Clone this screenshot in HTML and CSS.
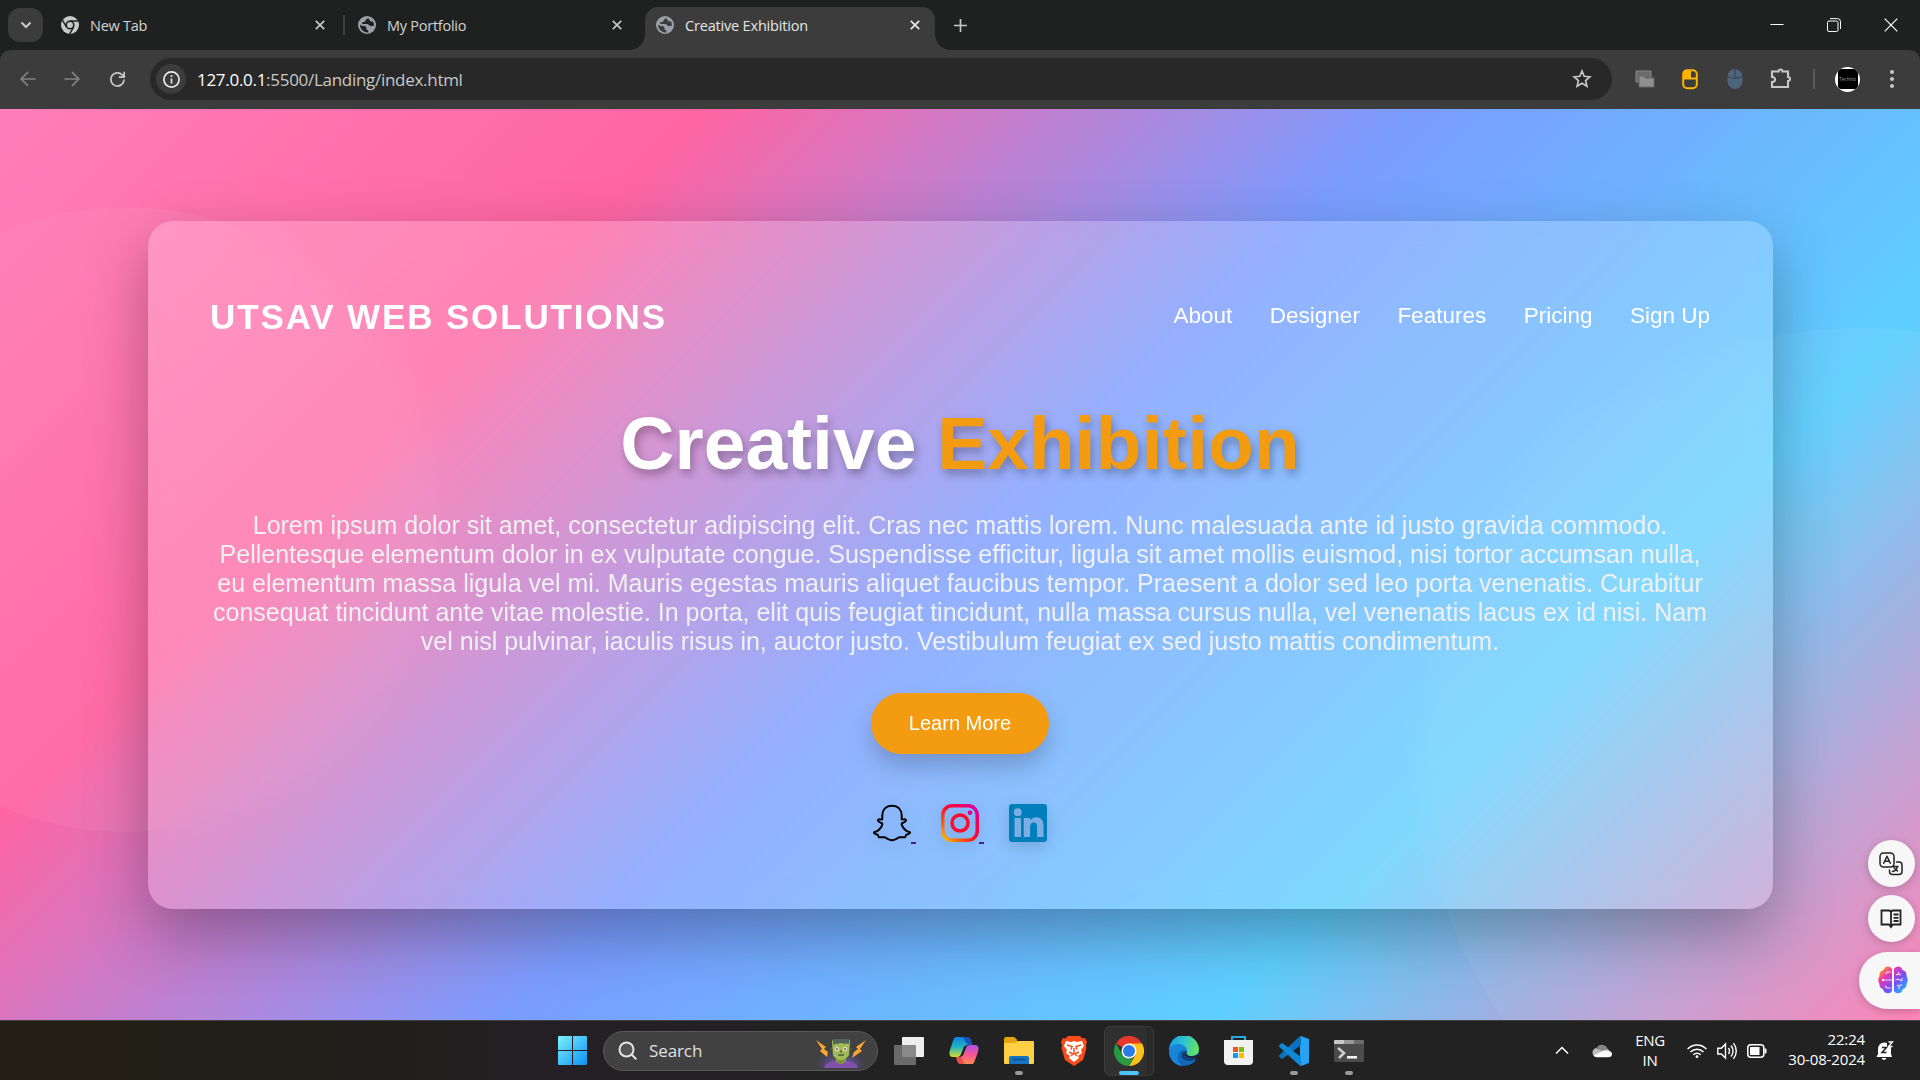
FILE: index.html
```html
<!DOCTYPE html>
<html lang="en">
<head>
<meta charset="utf-8">
<title>Creative Exhibition</title>
<link rel="stylesheet" href="styles.css">
</head>
<body>
<div class="screen">
  <div class="tabstrip">
    <div class="tab-search"><svg width="12" height="8" viewBox="0 0 12 8"><path d="M1.5 1.5 6 6l4.500-4.500" class="ln w2"/></svg></div>
    <div class="tab tab-first">
      <svg class="fav" width="18" height="18" viewBox="0 0 18 18"><circle cx="9" cy="9" r="9" fill="#c7cac9"/><circle cx="9" cy="9" r="3.800" fill="#c7cac9" stroke="#1f2120" stroke-width="1.600"/><path d="M9 4.900h8M5.400 11 1.500 4.200M12.600 11l-4 7" stroke="#1f2120" stroke-width="1.500"/></svg>
      <span class="tab-title">New Tab</span>
      <svg class="x" width="10" height="10" viewBox="0 0 10 10"><path d="M.8.8l8.400 8.400M9.200.8.8 9.200" class="ln"/></svg>
    </div>
    <div class="tab-sep"></div>
    <div class="tab tab-second">
      <svg class="fav" width="18" height="18" viewBox="0 0 18 18"><circle cx="9" cy="9" r="9" fill="#9aa0a6"/><path d="M2 8.500q1.500 1.500 4 1.500 2.500 0 2.500 2v1.500q2 0 2 2.700-2 .5-4-.4Q2 13.500 2 8.500zM10.500 2.200Q8 2.500 7.500 4.500q0 1.500-2 1.500T4 7.500q.5.800 3 .5 3-.5 4 1t2.500 1q2-.5 2.500 0 .3-3-1.200-4.800-2 .8-2.800-.5-.8-1.500-1.500-2.500z" fill="#1f2120"/></svg>
      <span class="tab-title">My Portfolio</span>
      <svg class="x" width="10" height="10" viewBox="0 0 10 10"><path d="M.8.8l8.400 8.400M9.200.8.8 9.200" class="ln"/></svg>
    </div>
    <div class="tab tab-active">
      <svg class="fav" width="18" height="18" viewBox="0 0 18 18"><circle cx="9" cy="9" r="9" fill="#9aa0a6"/><path d="M2 8.500q1.500 1.500 4 1.500 2.500 0 2.500 2v1.500q2 0 2 2.700-2 .5-4-.4Q2 13.500 2 8.500zM10.500 2.200Q8 2.500 7.500 4.500q0 1.500-2 1.500T4 7.500q.5.800 3 .5 3-.5 4 1t2.500 1q2-.5 2.500 0 .3-3-1.200-4.800-2 .8-2.800-.5-.8-1.500-1.500-2.500z" fill="#3c3c3c"/></svg>
      <span class="tab-title">Creative Exhibition</span>
      <svg class="x" width="10" height="10" viewBox="0 0 10 10"><path d="M.8.8l8.400 8.400M9.200.8.8 9.200" class="ln lt"/></svg>
    </div>
    <svg class="plus" width="13" height="13" viewBox="0 0 13 13"><path d="M6.500 0v13M0 6.500h13" class="ln"/></svg>
    <div class="win-controls">
      <svg width="14" height="14" viewBox="0 0 14 14"><path d="M.5 6.500h13" stroke="#fff"/></svg>
      <svg width="14" height="14" viewBox="0 0 14 14" fill="none" stroke="#fff"><rect x=".5" y="3" width="10.500" height="10.500" rx="1.500"/><path d="M3 .6h7.500a3 3 0 0 1 3 3V11"/></svg>
      <svg width="14" height="14" viewBox="0 0 14 14"><path d="M.7.7l12.600 12.600M13.300.7.7 13.300" stroke="#fff" stroke-width="1.200"/></svg>
    </div>
  </div>

  <div class="toolbar-back"><div class="toolbar">
    <svg class="tool dim" width="16" height="16" viewBox="0 0 16 16"><path d="M15.500 8H1.500M8 1.200 1.200 8 8 14.800" class="ln"/></svg>
    <svg class="tool dim fwd" width="16" height="16" viewBox="0 0 16 16"><path d="M.5 8h14M8 1.200 14.800 8 8 14.800" class="ln"/></svg>
    <svg class="tool reload" width="17" height="17" viewBox="0 0 17 17"><path d="M15 8.500a6.600 6.600 0 1 1-1.800-4.600L15 5.700M15.200.8v5.400h-5.400" class="ln"/></svg>
    <div class="omnibox">
      <span class="info"><svg width="17" height="17" viewBox="0 0 17 17"><circle cx="8.500" cy="8.500" r="7.600" class="ln lt"/><path d="M8.500 7.500v5M8.500 4.300v1.800" class="ln lt"/></svg></span>
      <span class="url"><b>127.0.0.1</b>:5500/Landing/index.html</span>
      <svg class="star" width="20" height="20" viewBox="0 0 20 20"><path d="M10 2l2.200 5.300 5.700.5-4.300 3.800 1.300 5.600L10 14.200l-4.900 3 1.300-5.600L2.100 7.800l5.700-.5z" class="ln"/></svg>
    </div>
    <div class="exts">
      <svg width="20" height="18" viewBox="0 0 20 18"><path d="M1 1h15v11H1z" fill="#6b6b6b" stroke="#888"/><path d="M4 6h5l1 2h9v9H4z" fill="#8f8f8f" stroke="#666"/></svg>
      <svg width="20" height="22" viewBox="0 0 20 22"><rect x="3.200" y="2.200" width="13.600" height="18" rx="4" fill="none" stroke="#fdb400" stroke-width="2"/><path d="M3 4q1-2 3-2h4v8H3zM3 9.500h14v2H3zM9 2h2v8H9z" fill="#fdb400"/><path d="M5 4.500h3.500V9H5z" fill="#fdb400"/></svg>
      <svg width="20" height="22" viewBox="0 0 20 22"><path d="M2.500 9a7.500 8 0 0 1 15 0v4a7.500 8 0 0 1-15 0z" fill="#4d657a"/><path d="M2.500 8.500q7.500 3.500 15 0M10 1v9" stroke="#35424e" fill="none"/></svg>
      <svg width="22" height="22" viewBox="0 0 22 22"><path d="M2 3.500h6.500a2 2 0 0 1 4 0H18v5.500a2 2 0 0 1 0 4V19H2v-5q3 0 3-2.500T2 9z" class="ln w2"/></svg>
    </div>
    <div class="tool-sep"></div>
    <div class="avatar"><span>Techno</span></div>
    <svg class="dots" width="6" height="20" viewBox="0 0 6 20" fill="#c7c7c7"><circle cx="3" cy="3" r="2"/><circle cx="3" cy="10" r="2"/><circle cx="3" cy="17" r="2"/></svg>
  </div></div>

  <main class="page">
    <div class="orb orb-left"></div>
    <div class="orb orb-right"></div>
    <section class="card">
      <header class="card-head">
        <div class="logo">UTSAV WEB SOLUTIONS</div>
        <nav class="nav"><a>About</a><a>Designer</a><a>Features</a><a>Pricing</a><a>Sign Up</a></nav>
      </header>
      <h1>Creative <span>Exhibition</span></h1>
      <p class="lead">Lorem ipsum dolor sit amet, consectetur adipiscing elit. Cras nec mattis lorem. Nunc malesuada ante id justo gravida commodo. Pellentesque elementum dolor in ex vulputate congue. Suspendisse efficitur, ligula sit amet mollis euismod, nisi tortor accumsan nulla, eu elementum massa ligula vel mi. Mauris egestas mauris aliquet faucibus tempor. Praesent a dolor sed leo porta venenatis. Curabitur consequat tincidunt ante vitae molestie. In porta, elit quis feugiat tincidunt, nulla massa cursus nulla, vel venenatis lacus ex id nisi. Nam vel nisl pulvinar, iaculis risus in, auctor justo. Vestibulum feugiat ex sed justo mattis condimentum.</p>
      <a class="cta">Learn More</a>
      <div class="social">
        <a><svg width="38" height="38" viewBox="0 0 38 38"><path d="M19 1.700c-6 0-9.700 4-9.700 9.500v4.200c-1.200.6-3-.8-4 .2-.8 1.200.4 2.400 3.500 3.600.9.5.6 1.700-.3 3.300-1.600 2.900-4 4.800-7.200 5.600-.9.600.1 1.800 3.500 2.700.6.700.2 2 1.200 2.400 1.800.5 3.600-.4 5.500.1 2.500.7 4.300 3 7.500 3s5-2.300 7.500-3c1.900-.5 3.700.4 5.500-.1 1-.4.6-1.700 1.200-2.400 3.400-.9 4.400-2.100 3.500-2.700-3.200-.8-5.600-2.700-7.200-5.600-.9-1.600-1.200-2.800-.3-3.300 3.100-1.200 4.300-2.400 3.500-3.600-1-1-2.800.4-4-.2v-4.200c0-5.500-3.700-9.500-9.700-9.500z" fill="none" stroke="#000" stroke-width="2" stroke-linejoin="round"/></svg><i></i></a>
        <a><svg width="38" height="38" viewBox="0 0 38 38"><defs><linearGradient id="ig" x1="0" y1="1" x2="1" y2="0"><stop offset="0" stop-color="#fd0"/><stop offset=".2" stop-color="#ff7a00"/><stop offset=".5" stop-color="#ff0c28"/><stop offset=".75" stop-color="#ef0060"/><stop offset="1" stop-color="#d000c8"/></linearGradient></defs><path d="M11 0h16a11 11 0 0 1 11 11v16a11 11 0 0 1-11 11H11A11 11 0 0 1 0 27V11A11 11 0 0 1 11 0zm0 3.500A7.500 7.500 0 0 0 3.500 11v16a7.500 7.500 0 0 0 7.500 7.500h16a7.500 7.500 0 0 0 7.500-7.500V11A7.500 7.500 0 0 0 27 3.500z" fill="url(#ig)"/><circle cx="19" cy="19" r="8" fill="none" stroke="#ff0b2e" stroke-width="3.500"/><circle cx="29" cy="8.800" r="2.300" fill="#e00086"/></svg><i></i></a>
        <a><svg width="38" height="38" viewBox="0 0 38 38"><path fill="#007ebb" d="M3 0h32a3 3 0 0 1 3 3v32a3 3 0 0 1-3 3H3a3 3 0 0 1-3-3V3a3 3 0 0 1 3-3z"/><g fill="#7baee4"><circle cx="8.800" cy="8.200" r="4"/><path d="M5.500 14H12v19H5.500zM14.800 14H21v2.600c1.300-2 3.400-3.300 6.200-3.300 4.900 0 7.300 3.100 7.300 8.700v11h-6.400V23c0-2.900-1-4.500-3.300-4.500-2.600 0-3.700 1.800-3.700 4.500v10h-6.300z"/></g></svg></a>
      </div>
    </section>

    <div class="bubble bubble-a"><svg width="24" height="24" viewBox="0 0 24 24" fill="none" stroke="#222" stroke-width="1.500" stroke-linecap="round" stroke-linejoin="round"><rect x="1" y="1" width="14" height="14" rx="3.500"/><path d="M4.700 11.300 8 4.300l3.300 7M5.800 9.300h4.400M17.500 10H20a3 3 0 0 1 3 3v6.500a3 3 0 0 1-3 3h-6.500a3 3 0 0 1-3-3V18M14 14.500h5M18 15c0 2-2 4-4.500 4.500M15 16l3.500 3"/></svg></div>
    <div class="bubble bubble-b"><svg width="22" height="20" viewBox="0 0 22 20" fill="none" stroke="#222" stroke-width="1.800"><path d="M11 3 9.500 1.500H1.500v14H9L11 18l2-2.500h7.500v-14h-8L11 3zM11 3v14M13.500 5.500h5M13.500 8.800h5M13.500 12h5"/></svg></div>
    <div class="brain-tab"><svg width="30" height="28" viewBox="0 0 30 28"><defs><linearGradient id="br" x1="0" y1="0" x2="1" y2="1"><stop offset=".1" stop-color="#ff9a1f"/><stop offset=".3" stop-color="#ee35b0"/><stop offset=".6" stop-color="#7050f5"/><stop offset=".9" stop-color="#20b8ff"/></linearGradient></defs><path d="M14 3v22q-2 3-5 2-3 0-4-4-4-1-3.500-5Q-1 14 1.500 10 1 5 5.500 4 7 0 11 .7 13 1 14 3zM16 3v22q2 3 5 2 3 0 4-4 4-1 3.500-5 2.500-4 0-8 .5-5-4-6Q23 0 19 .7 17 1 16 3z" fill="url(#br)"/><path d="M5 14h9M7.500 8l2-2H13M7 20l2 2h4M18 9l2-1 1-2M20 8l3 1M17.500 14l3-1 3 2 1-3M19 19l2 1v3M21 20l3-1.500" stroke="#f3d8ff" stroke-width="1.100" fill="none"/><circle cx="5" cy="14" r="1.200" fill="#fff"/></svg></div>
  </main>

  <footer class="taskbar">
    <div class="start"><svg width="29" height="29" viewBox="0 0 29 29"><defs><linearGradient id="wn" x1="0" y1="0" x2="1" y2="1" ><stop offset="0" stop-color="#7df0ff"/><stop offset="1" stop-color="#0a92f5"/></linearGradient></defs><path d="M0 1q0-1 1-1h13v14H0zM15 0h13q1 0 1 1v13H15zM0 15h14v14H1q-1 0-1-1zM15 15h14v13q0 1-1 1H15z" fill="url(#wn)"/></svg></div>
    <div class="search">
      <svg width="20" height="20" viewBox="0 0 20 20" fill="#555" stroke="#e4e4e4" stroke-width="2" stroke-linecap="round"><circle cx="8.500" cy="8.500" r="7"/><path d="M13.800 13.800l4 4"/></svg>
      <span>Search</span>
      <svg class="monster" width="52" height="32" viewBox="0 0 52 32"><defs><radialGradient id="gl" cy=".7"><stop offset="0" stop-color="#8a68e8"/><stop offset="1" stop-color="#4a4580" stop-opacity="0"/></radialGradient></defs><ellipse cx="26" cy="22" rx="26" ry="16" fill="url(#gl)"/><path d="M9 32q1-6 11-7h11q11 1 12 7z" fill="#8250ac"/><path d="M21 18h10v8q-5 4-10 0z" fill="#7e9440"/><path d="M17 6q0-3 3-3h12q3 0 3 3l-1 13q-3 5-8 5t-8-5z" fill="#a2bb54"/><path d="M18 3h16v5q-3-1-5 0-4-2-6 0-3-1-5 1z" fill="#4f6460"/><circle cx="22" cy="13" r="2" fill="#eee"/><circle cx="30" cy="13" r="2" fill="#eee"/><circle cx="22" cy="13" r="1" fill="#843"/><circle cx="30" cy="13" r="1" fill="#843"/><path d="M23 19h6M26 14v3M15 13h2M35 13h2M17 22h3M32 22h3" stroke="#4b6238" stroke-width="1.300"/><path d="M1 4l10 7-2 2 4 3-1 5-7-6 2-2zM51 4l-10 7 2 2-4 3-2 6 10-7-2-2z" fill="#ffa52e"/></svg>
    </div>
    <div class="apps">
      <div class="app"><svg width="30" height="28" viewBox="0 0 30 28"><rect x="8" y="0" width="22" height="20" rx="1" fill="#eee"/><rect x="0" y="8" width="22" height="20" rx="1" fill="#777" fill-opacity=".85"/></svg></div>
      <div class="app"><svg width="30" height="28" viewBox="0 0 30 28"><defs><linearGradient id="c1" x1="0" y1="0" x2="0" y2="1"><stop offset="0" stop-color="#1380e0"/><stop offset=".5" stop-color="#1fb5c0"/><stop offset="1" stop-color="#d8e030"/></linearGradient><linearGradient id="c2" x1="0" y1="1" x2="0" y2="0"><stop offset="0" stop-color="#ff8a50"/><stop offset=".5" stop-color="#f55596"/><stop offset="1" stop-color="#ab50ec"/></linearGradient></defs><path d="M7 0h11q3 0 4 4l1 4h-4q-4 0-5 4l-2 5q-1 3-4 3H4q-5 0-3-7L4 4q1-4 3-4z" fill="url(#c1)"/><path d="M18 0q3 0 4 4l1 4h-4l-3-4q-1-4-4-4z" fill="#1650b8"/><path d="M23 27H12q-3 0-4-4l-1-3h3q4 0 5-4l2-5q1-3 4-3h5q5 0 3 7l-3 8q-1 4-3 4z" fill="url(#c2)"/><path d="M12 27q-3 0-4-4l-1-3h4q2 0 3 4t3 3z" fill="#e94c45"/></svg></div>
      <div class="app run"><svg width="30" height="27" viewBox="0 0 30 27"><path d="M0 2Q0 0 2 0h8l3 2.500V7H0z" fill="#e5a50a"/><path d="M0 6h10l4-2h15q1 0 1 1v21q0 1-1 1H1q-1 0-1-1z" fill="#ffcf45"/><path d="M5 27v-6q0-2 2-2h16q2 0 2 2v6z" fill="#1673c0"/><path d="M9 22.500h12" stroke="#0c4d8c" stroke-width="1.500"/></svg></div>
      <div class="app"><svg width="26" height="30" viewBox="0 0 26 30"><path d="M7 0h12l2.500 2.500L24 2l2 4-1 3 .5 3-3.500 12-9 6-9-6L.5 12 1 9 0 6l2-4 2.500.5z" fill="#fb4b18"/><path d="M5 5l5 1 3-1 3 1 5-1 2 5-3 4 1 3-4 3 1 2-5 4-5-4 1-2-4-3 1-3-3-4z" fill="#fff"/><path d="M6 9l5 1.500-1 3M20 9l-5 1.500 1 3M8 16l4 2-2 2M18 16l-4 2 2 2M13 12v6" stroke="#fb4b18" stroke-width="1.500" fill="none"/></svg></div>
      <div class="app current"><svg width="30" height="30" viewBox="0 0 30 30"><path d="M15 15 2 7.500A15 15 0 0 1 28 7.500z" fill="#e5392c"/><path d="M15 7.500h13A15 15 0 0 1 15 30l6.500-11.300z" fill="#fcc21b"/><path d="M2 7.500l6.500 11.200L15 22.500h4.500L15 30A15 15 0 0 1 2 7.500z" fill="#289a42"/><circle cx="15" cy="15" r="7.500" fill="#fff"/><circle cx="15" cy="15" r="6" fill="#2a7bea"/></svg></div>
      <div class="app"><svg width="30" height="30" viewBox="0 0 30 30"><defs><linearGradient id="e1" x1="0" y1=".3" x2="1" y2=".5"><stop offset="0" stop-color="#1a9be0"/><stop offset=".5" stop-color="#30c5d0"/><stop offset="1" stop-color="#66e55a"/></linearGradient></defs><circle cx="15" cy="15" r="15" fill="#1268b8"/><path d="M0 15A15 15 0 0 1 30 13q0 7-8 7-5 0-5-2c0-1 1-1 1-3 0-3-3-6-8-6-6 0-10 5-10 6z" fill="url(#e1)"/><path d="M0 14c1-4 5-6 10-6 5 0 8 4 8 7-2-2-8-1-9 4-1 4 1 8 4 11C5 29 0 23 0 14z" fill="#1a85d8"/><path d="M18 15q-1 2-1 3c1 3 7 3 11 1.500q2-.5 1 1.500c-3 4-9 5-13 3-5-2-5-8 2-9z" fill="#123f7c"/><path d="M17.500 16q-.5 3 3 4 5 .8 9-2l1 3-3.500 3-1-1.500q1-2 0-1.500-6 2-10-2z" fill="#222"/></svg></div>
      <div class="app store"><svg width="29" height="29" viewBox="0 0 29 29"><path d="M8 5V1h13v4" fill="none" stroke="#28a8e8" stroke-width="2"/><path d="M0 4h29v21q0 4-4 4H4q-4 0-4-4z" fill="#f2f2f2"/><path d="M9 11h5v5H9z" fill="#f25022"/><path d="M15 11h5v5h-5z" fill="#7fba00"/><path d="M9 17h5v5H9z" fill="#00a4ef"/><path d="M15 17h5v5h-5z" fill="#ffb900"/></svg></div>
      <div class="app run"><svg width="30" height="30" viewBox="0 0 30 30"><path d="M22 0l8 3v24l-8 3-1-7V7z" fill="#27a2f2"/><path d="M22 0v9L4 22.500q-1 .5-2 0l-1.500-1.500q-.8-1 0-2L20 1q1-1 2-1z" fill="#0b72c0"/><path d="M22 30v-9L4 7.500q-1-.5-2 0L.5 9q-.8 1 0 2L20 29q1 1 2 1z" fill="#1088d8"/></svg></div>
      <div class="app run"><svg width="30" height="22" viewBox="0 0 30 22"><rect width="30" height="22" rx="1.500" fill="#4b4b4b"/><path d="M0 4V1q0-1 1-1h9v4z" fill="#c8c8c8"/><path d="M10 0h10v4H10z" fill="#999"/><path d="M20 0h9q1 0 1 1v3H20z" fill="#6c6c6c"/><path d="M4 8l6 5-5 5" fill="none" stroke="#ccc" stroke-width="2.600"/><path d="M13 16h10v2.600H13z" fill="#f2f2f2"/></svg></div>
    </div>
    <div class="tray">
      <svg width="14" height="9" viewBox="0 0 14 9"><path d="M1 7.500 7 1.500l6 6" fill="none" stroke="#fff" stroke-width="1.500"/></svg>
      <svg class="cloud" width="20" height="14" viewBox="0 0 20 14"><path d="M5 13a4.500 4.500 0 0 1 0-9 6 6 0 0 1 10.500 1A4.500 4.500 0 0 1 16 13z" fill="#bdbdbd"/><path d="M4 4.800Q7-.8 12 1.200q3 1 3.500 4L11 7z" fill="#858585"/><path d="M1.500 11.500 12 6.500q8-.5 8 3.500 0 3.200-4 3.200H5q-2.500 0-3.500-1.700z" fill="#fff"/></svg>
      <div class="lang">ENG<br>IN</div>
      <div class="status">
        <svg width="20" height="16" viewBox="0 0 20 16" fill="none" stroke="#fff" stroke-width="1.500"><path d="M.6 6a13 13 0 0 1 18.800 0M3.500 9a9 9 0 0 1 13 0M6.300 11.700a5.200 5.200 0 0 1 7.400 0"/><circle cx="10" cy="13.700" r="1.400" fill="#fff" stroke="none"/></svg>
        <svg width="20" height="18" viewBox="0 0 20 18" fill="none" stroke="#fff" stroke-width="1.400"><path d="M.8 6.300h3.500L8.500 2v14l-4.200-4H.8zM11.500 6q2 3 0 6M14 3.500q4 5.500 0 11M16.500 1.200q5.500 7.800 0 15.600"/></svg>
        <svg width="20" height="14" viewBox="0 0 20 14"><rect x=".8" y=".8" width="16" height="12.400" rx="3" fill="none" stroke="#fff" stroke-width="1.500"/><path d="M3 3h9.500v8H3zM17.500 4.500h1q1 0 1 1v3q0 1-1 1h-1z" fill="#fff"/></svg>
      </div>
      <div class="clock">22:24<br>30-08-2024</div>
      <svg class="bell" width="18" height="19" viewBox="0 0 18 19"><path d="M2 9q0-7.500 6.500-7.500T15 9v4l1 3H.5L2 13zM5.500 17h5q-1 2-2.500 2t-2.500-2z" fill="#fff"/><path d="M6 6.500h4.500L6 11.500h4.500" stroke="#222" stroke-width="1.500" fill="none"/><path d="M11 0h7v6h-7z" fill="#222"/><path d="M12.500 1h4l-4 4.500h4" stroke="#fff" stroke-width="1.300" fill="none"/></svg>
    </div>
  </footer>
</div>
</body>
</html>
```
FILE: styles.css
```css
* { box-sizing: border-box; }
body { margin: 0; overflow: hidden; }
svg { display: block; flex: none; }
.screen { width: 1920px; height: 1080px; display: flex; flex-direction: column; font-family: "Open Sans", "Noto Sans", sans-serif; }
.ln { fill: none; stroke: #c7c7c7; stroke-width: 1.7; }
.ln.w2 { stroke-width: 2.1; }
.ln.lt { stroke: #e8e8e8; }

/* Browser tabs */
.tabstrip { height: 50px; background: #1f2120; display: flex; align-items: center; padding-left: 8px; flex: none; }
.tab-search { width: 35px; height: 34px; border-radius: 12px; background: #3c3c3c; display: grid; place-items: center; }
.tab { display: flex; align-items: center; color: #d2d3d3; font-size: 14.5px; height: 34px; }
.tab-title { flex: 1; margin-left: 11px; letter-spacing: -.25px; white-space: nowrap; }
.tab-first { width: 264px; margin-left: 18px; }
.tab-second { width: 264px; margin-left: 13px; }
.tab-sep { width: 2px; height: 20px; background: #3c3c3c; margin-left: 18px; }
.tab-active { position: relative; width: 290px; height: 43px; align-self: flex-end; margin-left: 23px; padding: 0 15px 7px 11px; background: #3c3c3c; border-radius: 13px 13px 0 0; color: #e5e5e5; }
.tab-active .tab-title { letter-spacing: -.18px; }
.tab-active::before, .tab-active::after { content: ""; position: absolute; bottom: 0; width: 15px; height: 15px; }
.tab-active::before { left: -15px; background: radial-gradient(circle at 0 0, transparent 14.5px, #3c3c3c 15px); }
.tab-active::after { right: -15px; background: radial-gradient(circle at 100% 0, transparent 14.5px, #3c3c3c 15px); }
.plus { margin-left: 19px; }
.win-controls { margin-left: auto; display: flex; gap: 43px; padding: 0 22px 1px 0; }

/* Address bar */
.toolbar-back { height: 59px; background: #1f2120; flex: none; }
.toolbar { height: 59px; background: #3c3c3c; border-radius: 10px 10px 0 0; display: flex; align-items: center; padding: 0 0 1px 20px; }
.dim { opacity: .5; }
.fwd { margin-left: 28px; }
.reload { margin-left: 29px; }
.omnibox { width: 1462px; height: 42px; border-radius: 21px; background: #282828; margin-left: 24px; display: flex; align-items: center; padding: 0 20px 0 6px; }
.info { width: 30px; height: 30px; border-radius: 50%; background: #3c3c3c; display: grid; place-items: center; }
.url { margin-left: 11px; flex: 1; color: #c7c7c7; font-size: 17px; letter-spacing: -.29px; }
.url b { font-weight: 400; color: #fff; }
.exts { display: flex; align-items: center; gap: 25px; margin-left: 23px; }
.tool-sep { width: 2px; height: 20px; background: #5b5b5b; margin-left: 21px; }
.avatar { width: 25px; height: 25px; border-radius: 50%; overflow: hidden; background: #fff; margin-left: 20px; display: grid; place-items: center; }
.avatar span { width: 20px; height: 20px; border-radius: 3px; background: #000; color: #999; font-size: 5px; line-height: 20px; text-align: center; }
.dots { margin-left: 29px; }

/* Landing page */
.page { flex: 1; position: relative; overflow: hidden; display: flex; align-items: center; justify-content: center; background: linear-gradient(135deg, #ff7eb9, #ff65a3, #7a9cff, #5ecfff, #ff7eb3); font-family: "Liberation Sans", Arial, sans-serif; }
.orb { position: absolute; border-radius: 50%; background: rgba(255,255,255,.05); }
.orb-left { width: 625px; height: 625px; left: -187.5px; top: 98px; }
.orb-right { width: 875px; height: 875px; left: 1422px; top: 219px; }
.card { position: relative; width: 1625px; height: 688px; padding: 62.5px; border-radius: 25px; background: rgba(255,255,255,.2); box-shadow: 0 25px 62.5px rgba(0,0,0,.3); backdrop-filter: blur(12px); display: flex; flex-direction: column; align-items: center; }
.card-head { width: 100%; height: 66px; display: flex; align-items: center; justify-content: space-between; color: #fff; flex: none; }
.logo { font-size: 35px; font-weight: 700; letter-spacing: 1.875px; padding-top: 1px; }
.nav { display: flex; gap: 37.5px; font-size: 22.5px; }
h1 { margin: 51px 0 0; font-size: 75px; line-height: 86px; color: #fff; text-shadow: 2.5px 5px 10px rgba(0,0,0,.3); }
h1 span { color: #f39c12; }
.lead { margin: 25px 0 0; width: 1500px; font-size: 25px; line-height: 29px; text-align: center; color: #f0f0f0; }
.cta { margin-top: 37px; width: 178px; height: 60.5px; line-height: 60px; border-radius: 31px; background: #f39c12; color: #fff; font-size: 20px; text-align: center; box-shadow: 0 12.5px 25px rgba(0,0,0,.2); flex: none; }
.social { margin-top: 50px; display: flex; gap: 25px; }
.social a { display: flex; align-items: flex-end; height: 40px; }
.social svg { margin-bottom: 2px; filter: drop-shadow(0 5px 8px rgba(0,0,0,.15)); }
.social i { width: 5px; height: 2px; background: #551a8b; }

/* Floating assistant */
.bubble { position: absolute; left: 1868px; width: 47px; height: 47px; border-radius: 50%; background: #f7f7f8; display: grid; place-items: center; box-shadow: 0 2px 8px rgba(0,0,0,.2); }
.bubble-a { top: 731px; }
.bubble-b { top: 786px; }
.bubble svg { margin-right: 1px; }
.brain-tab { position: absolute; right: 0; top: 843px; width: 61px; height: 57px; padding: 0 0 2px 19px; border-radius: 29px 0 0 29px; background: #f7f7f8; display: flex; align-items: center; box-shadow: 0 2px 8px rgba(0,0,0,.2); }

/* Taskbar */
.taskbar { height: 60px; flex: none; display: flex; align-items: center; background: linear-gradient(90deg, #231f14, #211f1c 20%, #241f24 28%, #222 45%, #222); border-top: 1px solid #414141; color: #fff; }
.start { margin-left: 558px; }
.search { width: 275px; height: 40px; margin-left: 16px; border: 1px solid #575757; border-radius: 20px; background: #414141; display: flex; align-items: center; padding: 0 10px 0 14px; font-size: 17px; letter-spacing: -.1px; color: #e0e0e0; }
.search span { margin-left: 11px; flex: 1; }
.monster { align-self: flex-end; margin-bottom: 2px; }
.apps { display: flex; margin-left: 6px; }
.app { position: relative; width: 50px; height: 50px; margin-right: 5px; display: grid; place-items: center; border-radius: 6px; }
.app.run::after, .app.current::after { content: ""; position: absolute; bottom: 1px; left: 21px; width: 8px; height: 4px; border-radius: 2px; background: #999; }
.app.current { background: #303030; border: 1px solid #3b3b3b; box-shadow: inset -6px 0 #2a2a2a; }
.app.current::after { width: 20px; left: 14px; bottom: 0; background: #4cc2ff; }
.app.store { padding: 0 2px 1px 0; }
.tray { margin-left: auto; display: flex; align-items: center; padding-right: 26px; font-size: 15px; line-height: 20px; }
.cloud { margin-left: 23px; }
.lang { margin-left: 22px; width: 32px; padding-bottom: 2px; text-align: center; letter-spacing: -.3px; }
.status { display: flex; align-items: center; gap: 10px; margin-left: 21px; }
.clock { width: 84px; margin-left: 14px; padding-bottom: 4px; text-align: right; letter-spacing: -.15px; white-space: nowrap; }
.bell { margin-left: 11px; }
```
